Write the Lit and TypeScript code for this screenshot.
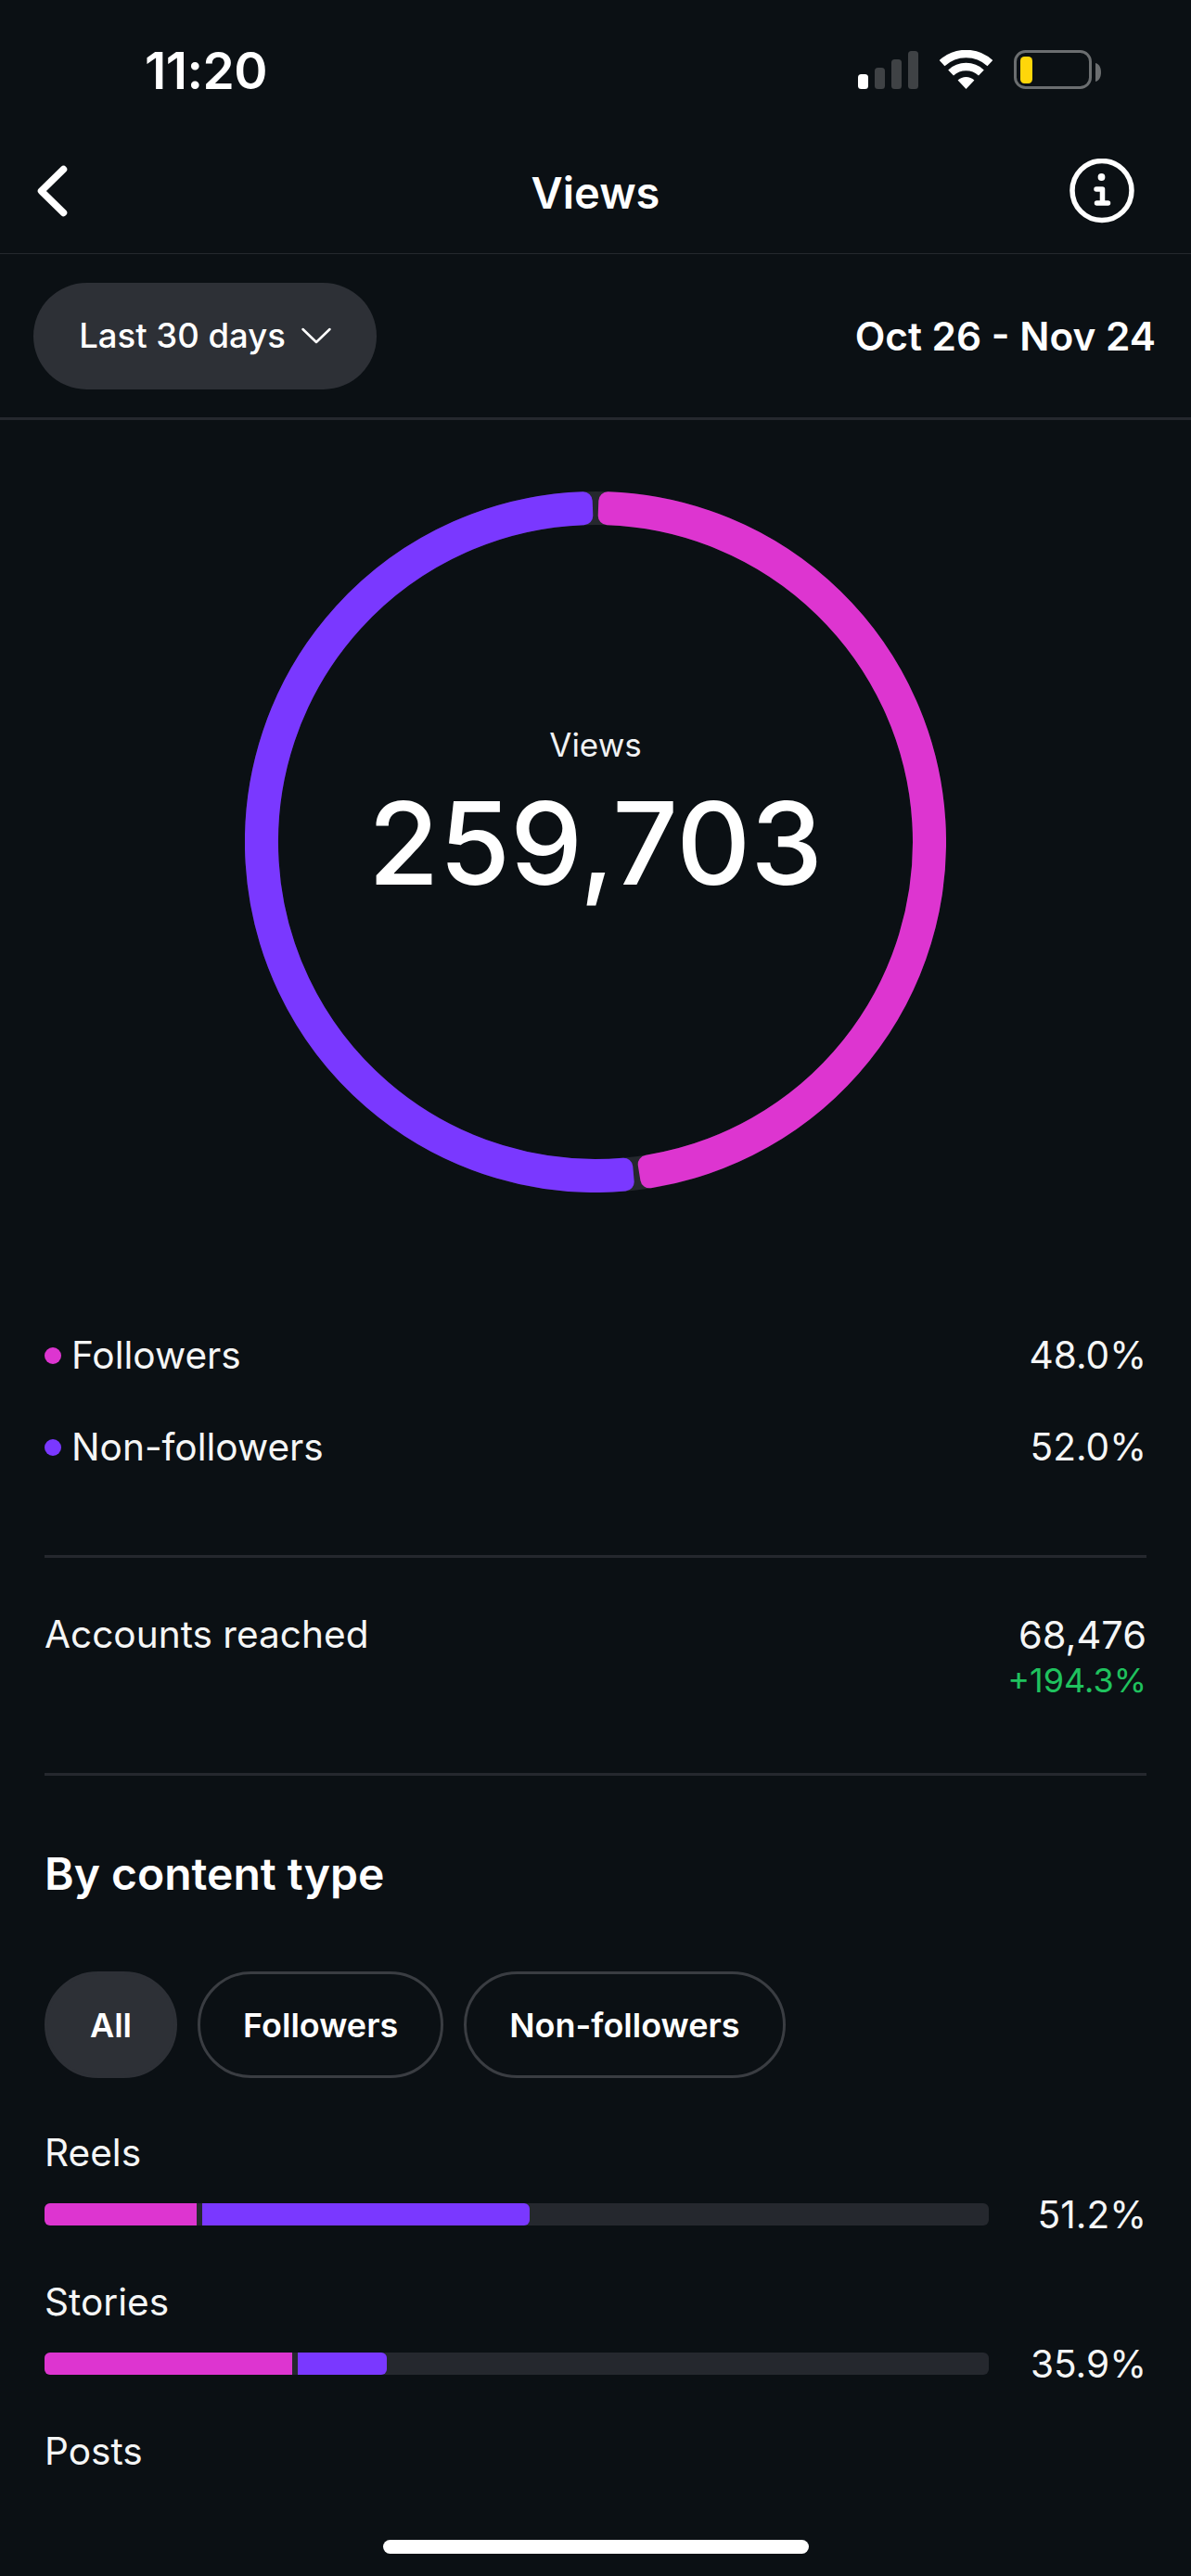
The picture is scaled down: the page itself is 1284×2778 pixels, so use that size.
import { LitElement, html, css } from "lit";
import { customElement } from "lit/decorators.js";

const PINK = "#dd35d0";
const PURPLE = "#7a38ff";

function sector(startDeg: number, endDeg: number) {
  // annular sector inset by the corner radius; stroked with round joins to round its corners
  const c = 378;
  const outer = 368;
  const inner = 352;
  const pt = (r: number, deg: number) => {
    const a = (deg * Math.PI) / 180;
    return `${(c + r * Math.sin(a)).toFixed(2)} ${(c - r * Math.cos(a)).toFixed(2)}`;
  };
  const large = Math.abs(endDeg - startDeg) > 180 ? 1 : 0;
  return `M${pt(outer, startDeg)} A${outer} ${outer} 0 ${large} 1 ${pt(outer, endDeg)} L${pt(inner, endDeg)} A${inner} ${inner} 0 ${large} 0 ${pt(inner, startDeg)} Z`;
}

const rows = [
  { name: "Reels", pink: 164, purple: 353, pct: "51.2%" },
  { name: "Stories", pink: 267, purple: 96, pct: "35.9%" },
];

@customElement("app-root")
export class AppRoot extends LitElement {
  static styles = css`
    :host {
      display: block;
      width: 1284px;
      height: 2778px;
      background: #0b1014;
      color: #fff;
      font-family: Inter, "Liberation Sans", sans-serif;
      position: relative;
      overflow: hidden;
    }
    .status {
      height: 130px;
      box-sizing: border-box;
      display: flex;
      justify-content: space-between;
      padding: 45px 94px 0 156px;
    }
    .time {
      font-size: 55px;
      line-height: 62px;
      font-weight: 600;
      letter-spacing: -0.5px;
    }
    .status svg {
      margin-top: 9px;
    }
    .nav {
      height: 144px;
      box-sizing: border-box;
      border-bottom: 1px solid #25282e;
      display: flex;
      align-items: center;
      justify-content: space-between;
      padding: 9px 61px 0 38px;
      position: relative;
    }
    .nav h1 {
      position: absolute;
      left: 0;
      right: 0;
      top: 50px;
      margin: 0;
      text-align: center;
      font-size: 47px;
      line-height: 56px;
      font-weight: 600;
    }
    .range {
      height: 179px;
      box-sizing: border-box;
      border-bottom: 3px solid #25282e;
      display: flex;
      align-items: center;
      justify-content: space-between;
      padding: 0 38px 0 36px;
    }
    .range-pill {
      width: 370px;
      height: 115px;
      border-radius: 58px;
      background: #2d3036;
      display: flex;
      align-items: center;
      justify-content: center;
      gap: 17px;
      font-size: 36.5px;
      font-weight: 500;
    }
    .dates {
      font-size: 42.4px;
      font-weight: 600;
    }
    .donut-wrap {
      display: flex;
      justify-content: center;
      padding-top: 77px;
    }
    .donut {
      width: 756px;
      height: 756px;
      position: relative;
    }
    .donut svg {
      display: block;
    }
    .center {
      position: absolute;
      inset: 0;
      display: flex;
      flex-direction: column;
      align-items: center;
    }
    .center .label {
      margin-top: 253px;
      font-size: 35px;
      line-height: 40px;
      color: #f1f2f3;
    }
    .center .value {
      margin-top: 21px;
      font-size: 124px;
      line-height: 130px;
      font-weight: 500;
    }
    .content {
      padding: 126px 48px 0 48px;
    }
    .row {
      display: flex;
      align-items: center;
      justify-content: space-between;
      height: 99px;
      font-size: 40.6px;
      color: #f5f6f6;
    }
    .row .name {
      display: flex;
      align-items: center;
      gap: 11px;
    }
    .dot {
      width: 18px;
      height: 18px;
      border-radius: 50%;
    }
    .dot-a {
      background: #dd35d0;
    }
    .dot-b {
      background: #7a38ff;
    }
    .rule {
      height: 3px;
      background: #25282e;
    }
    .rule.first {
      margin-top: 67px;
    }
    .reach {
      height: 232px;
      box-sizing: border-box;
      padding-top: 58px;
      display: flex;
      justify-content: space-between;
      font-size: 40.6px;
      line-height: 50px;
      color: #f5f6f6;
    }
    .reach-right {
      text-align: right;
    }
    .reach-num {
      font-size: 41.6px;
    }
    .delta {
      font-size: 36px;
      line-height: 40px;
      margin-top: 4px;
      color: #1fc25e;
    }
    h2 {
      margin: 80px 0 0 0;
      font-size: 48px;
      line-height: 52px;
      font-weight: 600;
    }
    .chips {
      display: flex;
      gap: 22px;
      margin-top: 79px;
    }
    .chip {
      height: 115px;
      box-sizing: border-box;
      border-radius: 58px;
      border: 3px solid #3a3d42;
      padding: 0 46px;
      display: flex;
      align-items: center;
      font-size: 36px;
      font-weight: 600;
    }
    .chip.on {
      background: #2d3036;
      border-color: #2d3036;
    }
    .bars {
      margin-top: 57px;
      font-size: 40.6px;
    }
    .item-name {
      line-height: 48px;
      color: #f5f6f6;
    }
    .bar-row {
      display: flex;
      align-items: center;
      justify-content: space-between;
      height: 48px;
      margin: 18px 0 47px 0;
      color: #f5f6f6;
    }
    .track {
      width: 1018px;
      height: 24px;
      border-radius: 6px;
      background: #25282e;
      display: flex;
      overflow: hidden;
    }
    .seg-a {
      background: #dd35d0;
    }
    .seg-b {
      background: #7a38ff;
      margin-left: 6px;
      border-radius: 0 6px 6px 0;
    }
    .home {
      position: absolute;
      left: 413px;
      top: 2739px;
      width: 459px;
      height: 15px;
      border-radius: 8px;
      background: #fff;
    }
  `;

  render() {
    return html`
      <div class="status">
        <div class="time">11:20</div>
        <svg width="270" height="46" viewBox="0 0 270 46">
          <rect x="5" y="26" width="11" height="16" rx="3.5" fill="#fff" />
          <rect x="23" y="19" width="11" height="23" rx="3.5" fill="#3f4245" />
          <rect x="41" y="10" width="11" height="32" rx="3.5" fill="#3f4245" />
          <rect x="59" y="1" width="11" height="41" rx="3.5" fill="#3f4245" />
          <g fill="none" stroke="#fff" stroke-width="8.5">
            <path d="M95.6 14.2 A38 38 0 0 1 147.4 14.2" />
            <path d="M105.1 24.5 A24 24 0 0 1 137.9 24.5" />
          </g>
          <path d="M121.5 42 L112.6 32.5 A13 13 0 0 1 130.4 32.5 Z" fill="#fff" />
          <rect x="174.5" y="1.5" width="81" height="39" rx="11" fill="none" stroke="#6b6e70" stroke-width="3" />
          <rect x="180" y="7" width="13" height="29" rx="4.5" fill="#ffd60a" />
          <path d="M261 14 C265 15 267 19 267 24 C267 29 265 33 261 34 Z" fill="#6b6e70" />
        </svg>
      </div>

      <div class="nav">
        <svg width="40" height="60" viewBox="0 0 40 60">
          <path d="M30.5 6.5 L6.5 30 L30.5 53.5" fill="none" stroke="#fff" stroke-width="7.5" stroke-linecap="round" stroke-linejoin="round" />
        </svg>
        <h1>Views</h1>
        <svg width="70" height="70" viewBox="0 0 70 70">
          <circle cx="35" cy="34.5" r="32" fill="none" stroke="#fff" stroke-width="5.5" />
          <circle cx="34.5" cy="20" r="3.9" fill="#fff" />
          <path d="M29 33 H35.5 V48 M29.5 48 H41.5" fill="none" stroke="#fff" stroke-width="5.5" stroke-linecap="round" stroke-linejoin="round" />
        </svg>
      </div>

      <div class="range">
        <div class="range-pill">
          <span>Last 30 days</span>
          <svg width="32" height="18" viewBox="0 0 32 18">
            <path d="M1.5 2 L16 16 L30.5 2" fill="none" stroke="#fff" stroke-width="2.5" stroke-linecap="round" stroke-linejoin="round" />
          </svg>
        </div>
        <div class="dates">Oct 26 - Nov 24</div>
      </div>

      <div class="donut-wrap">
        <div class="donut">
          <svg width="756" height="756" viewBox="0 0 756 756">
            <circle cx="378" cy="378" r="360" fill="none" stroke="#25282e" stroke-width="36" />
            <path d=${sector(2.07, 170.89)} fill=${PINK} stroke=${PINK} stroke-width="20" stroke-linejoin="round" />
            <path d=${sector(175.06, 357.93)} fill=${PURPLE} stroke=${PURPLE} stroke-width="20" stroke-linejoin="round" />
          </svg>
          <div class="center">
            <div class="label">Views</div>
            <div class="value">259,703</div>
          </div>
        </div>
      </div>

      <div class="content">
        <div class="row">
          <div class="name"><span class="dot dot-a"></span>Followers</div>
          <div>48.0%</div>
        </div>
        <div class="row">
          <div class="name"><span class="dot dot-b"></span>Non-followers</div>
          <div>52.0%</div>
        </div>
        <div class="rule first"></div>
        <div class="reach">
          <div>Accounts reached</div>
          <div class="reach-right">
            <div class="reach-num">68,476</div>
            <div class="delta">+194.3%</div>
          </div>
        </div>
        <div class="rule"></div>
        <h2>By content type</h2>
        <div class="chips">
          <div class="chip on">All</div>
          <div class="chip">Followers</div>
          <div class="chip">Non-followers</div>
        </div>
        <div class="bars">
          ${rows.map(
            (r) => html`
              <div class="item-name">${r.name}</div>
              <div class="bar-row">
                <div class="track">
                  <div class="seg-a" style="width:${r.pink}px"></div>
                  <div class="seg-b" style="width:${r.purple}px"></div>
                </div>
                <div>${r.pct}</div>
              </div>
            `
          )}
          <div class="item-name">Posts</div>
        </div>
      </div>
      <div class="home"></div>
    `;
  }
}
